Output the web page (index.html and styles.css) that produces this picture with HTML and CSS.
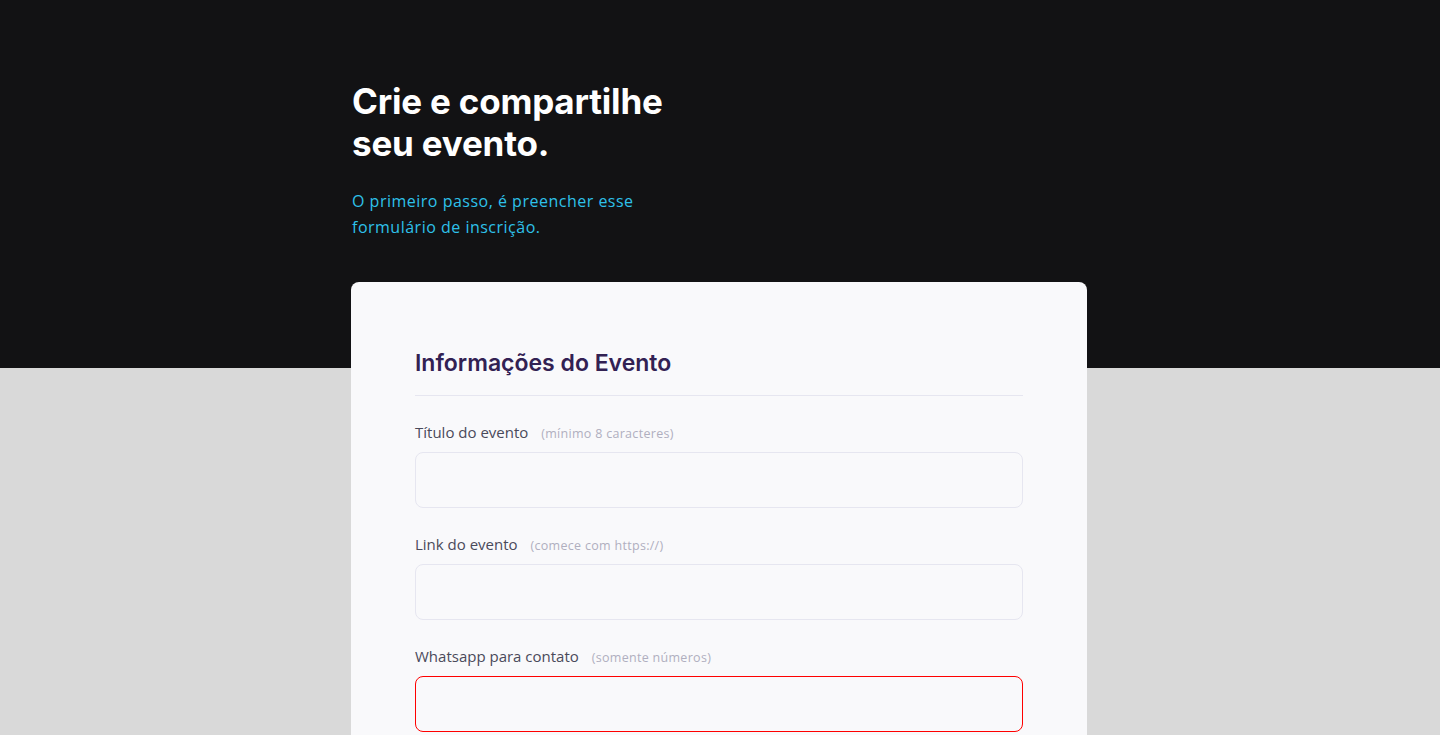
FILE: index.html
```html
<!DOCTYPE html>
<html lang="pt-BR">
<head>
    <meta charset="UTF-8">
    <meta name="viewport" content="width=device-width, initial-scale=1.0">
    <title>Cadastro de Evento</title>
    <link rel="stylesheet" href="styles.css">
</head>
<body>
    <header class="page-header">
        <div class="container">
            <h1>Crie e compartilhe seu evento.</h1>
            <p>O primeiro passo, é preencher esse formulário de inscrição.</p>
        </div>
    </header>

    <main class="container">
        <form class="card">
            <fieldset>
                <legend>Informações do Evento</legend>

                <div class="field">
                    <label for="title">Título do evento <span>(mínimo 8 caracteres)</span></label>
                    <input type="text" id="title">
                </div>

                <div class="field">
                    <label for="link">Link do evento <span>(comece com https://)</span></label>
                    <input type="text" id="link">
                </div>

                <div class="field">
                    <label for="whatsapp">Whatsapp para contato <span>(somente números)</span></label>
                    <input type="text" id="whatsapp" class="invalid">
                </div>
            </fieldset>
        </form>
    </main>
</body>
</html>
```

FILE: styles.css
```css
* {
    box-sizing: border-box;
}
body {
    margin: 0;
    background: #d9d9d9;
    font-family: 'Open Sans', 'Noto Sans', sans-serif;
    color: #4a4a5a;
}
.container {
    width: 736px;
    margin: 0 auto;
}
.page-header {
    background: #121214;
    height: 368px;
    padding-top: 80px;
}
.page-header h1 {
    margin: 0;
    width: 340px;
    font-family: Inter, 'Liberation Sans', sans-serif;
    font-weight: 700;
    font-size: 35px;
    line-height: 42px;
    letter-spacing: -0.2px;
    color: #fff;
}
.page-header p {
    margin: 24px 0 0;
    width: 320px;
    font-size: 16px;
    line-height: 26px;
    letter-spacing: 0.5px;
    color: #2ec1ea;
}
.card {
    width: 736px;
    margin-top: -86px;
    margin-left: -1px;
    background: #f9f9fb;
    border-radius: 8px;
    padding: 64px 64px 40px;
}
fieldset {
    border: 0;
    margin: 0;
    padding: 0;
}
legend {
    display: block;
    width: 100%;
    padding: 0 0 15px;
    border-bottom: 1px solid #e6e6f0;
    font-family: Inter, 'Liberation Sans', sans-serif;
    font-weight: 600;
    font-size: 23px;
    line-height: 34px;
    color: #322153;
}
.field {
    margin-top: 24px;
}
.field label {
    display: block;
    height: 24px;
    font-size: 15px;
    line-height: 24px;
    color: #4a4a5a;
}
.field label span {
    margin-left: 9px;
    font-size: 12.5px;
    line-height: 1;
    letter-spacing: 0.3px;
    color: #b0afbf;
}
.field input {
    display: block;
    width: 100%;
    height: 56px;
    margin-top: 8px;
    border: 1px solid #e6e6f0;
    border-radius: 8px;
    background: #f9f9fb;
    outline: none;
    padding: 0 16px;
    font: inherit;
}
.field input.invalid {
    border-color: #ff0000;
}
```
